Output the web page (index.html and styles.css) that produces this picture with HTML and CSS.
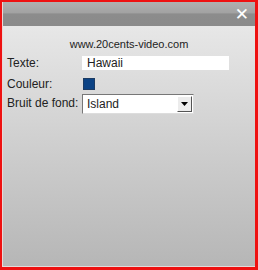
FILE: index.html
```html
<!DOCTYPE html>
<html>
<head>
<meta charset="utf-8">
<link rel="stylesheet" href="styles.css">
</head>
<body>
<div class="frame">
  <div class="panel">
    <div class="titlebar"><span class="close">✕</span></div>
    <div class="content">
      <div class="site">www.20cents-video.com</div>
      <div class="row row-text">
        <span class="label">Texte:</span>
        <span class="input">Hawaii</span>
      </div>
      <div class="row row-color">
        <span class="label">Couleur:</span>
        <span class="swatch"></span>
      </div>
      <div class="row row-select">
        <span class="label">Bruit de fond:</span>
        <span class="select"><span class="value">Island</span><span class="arrow"><svg width="7" height="4" viewBox="0 0 7 4"><path d="M0 0H7L3.5 4Z" fill="#000"/></svg></span></span>
      </div>
    </div>
  </div>
</div>
</body>
</html>
```
FILE: styles.css
```css
html, body {
  margin: 0;
  padding: 0;
  width: 258px;
  height: 270px;
  overflow: hidden;
  background: #e00000;
}
.frame {
  box-sizing: border-box;
  width: 258px;
  height: 270px;
  padding: 2px 3px 3px 2px;
  background: #ee1111;
}
.panel {
  height: 100%;
  display: flex;
  flex-direction: column;
  background: linear-gradient(#ececec, #b6b6b6);
  border-bottom: 1px solid #e4dada;
  border-left: 1px solid #e8d8d8;
  box-sizing: border-box;
  font-family: "Liberation Sans", Arial, sans-serif;
  font-size: 12px;
  color: #222;
}
.titlebar {
  height: 24px;
  background: linear-gradient(#b0b0b0 0, #a2a2a2 45%, #8c8c8c 50%, #8a8a8a 100%);
  display: flex;
  justify-content: flex-end;
  align-items: center;
  padding-right: 6px;
}
.close {
  color: #fff;
  font-size: 17px;
  line-height: 1;
  font-family: "DejaVu Sans", sans-serif;
}
.content {
  padding: 12px 0 0 4px;
}
.site {
  text-align: center;
  font-size: 11px;
  line-height: 13px;
  margin-bottom: 5px;
  padding-right: 4px;
}
.row {
  display: flex;
  align-items: center;
}
.label {
  width: 75px;
  flex: none;
  line-height: 14px;
}
.row-text { height: 14px; }
.input {
  width: 147px;
  height: 14px;
  background: #fff;
  line-height: 14px;
  padding-left: 5px;
  box-sizing: border-box;
}
.row-color {
  height: 12px;
  margin-top: 8px;
}
.swatch {
  width: 12px;
  height: 12px;
  margin-left: 1px;
  background: #0b4284;
  border: 1px solid #1c3b63;
  box-sizing: border-box;
}
.row-select {
  height: 20px;
  margin-top: 4px;
  align-items: flex-start;
}
.row-select .label { padding-top: 2px; }
.select {
  width: 112px;
  height: 20px;
  box-sizing: border-box;
  background: #fff;
  border-top: 1px solid #777;
  border-left: 1px solid #777;
  border-right: 1px solid #ddd;
  border-bottom: 1px solid #ddd;
  display: flex;
  align-items: center;
  justify-content: space-between;
  padding: 1px;
}
.value { padding-left: 3px; }
.arrow {
  width: 15px;
  height: 16px;
  box-sizing: border-box;
  background: #ececec;
  border-right: 1px solid #555;
  border-bottom: 1px solid #555;
  border-top: 1px solid #fff;
  border-left: 1px solid #fff;
  display: flex;
  align-items: center;
  justify-content: center;
}
.arrow svg { display: block; }
```
